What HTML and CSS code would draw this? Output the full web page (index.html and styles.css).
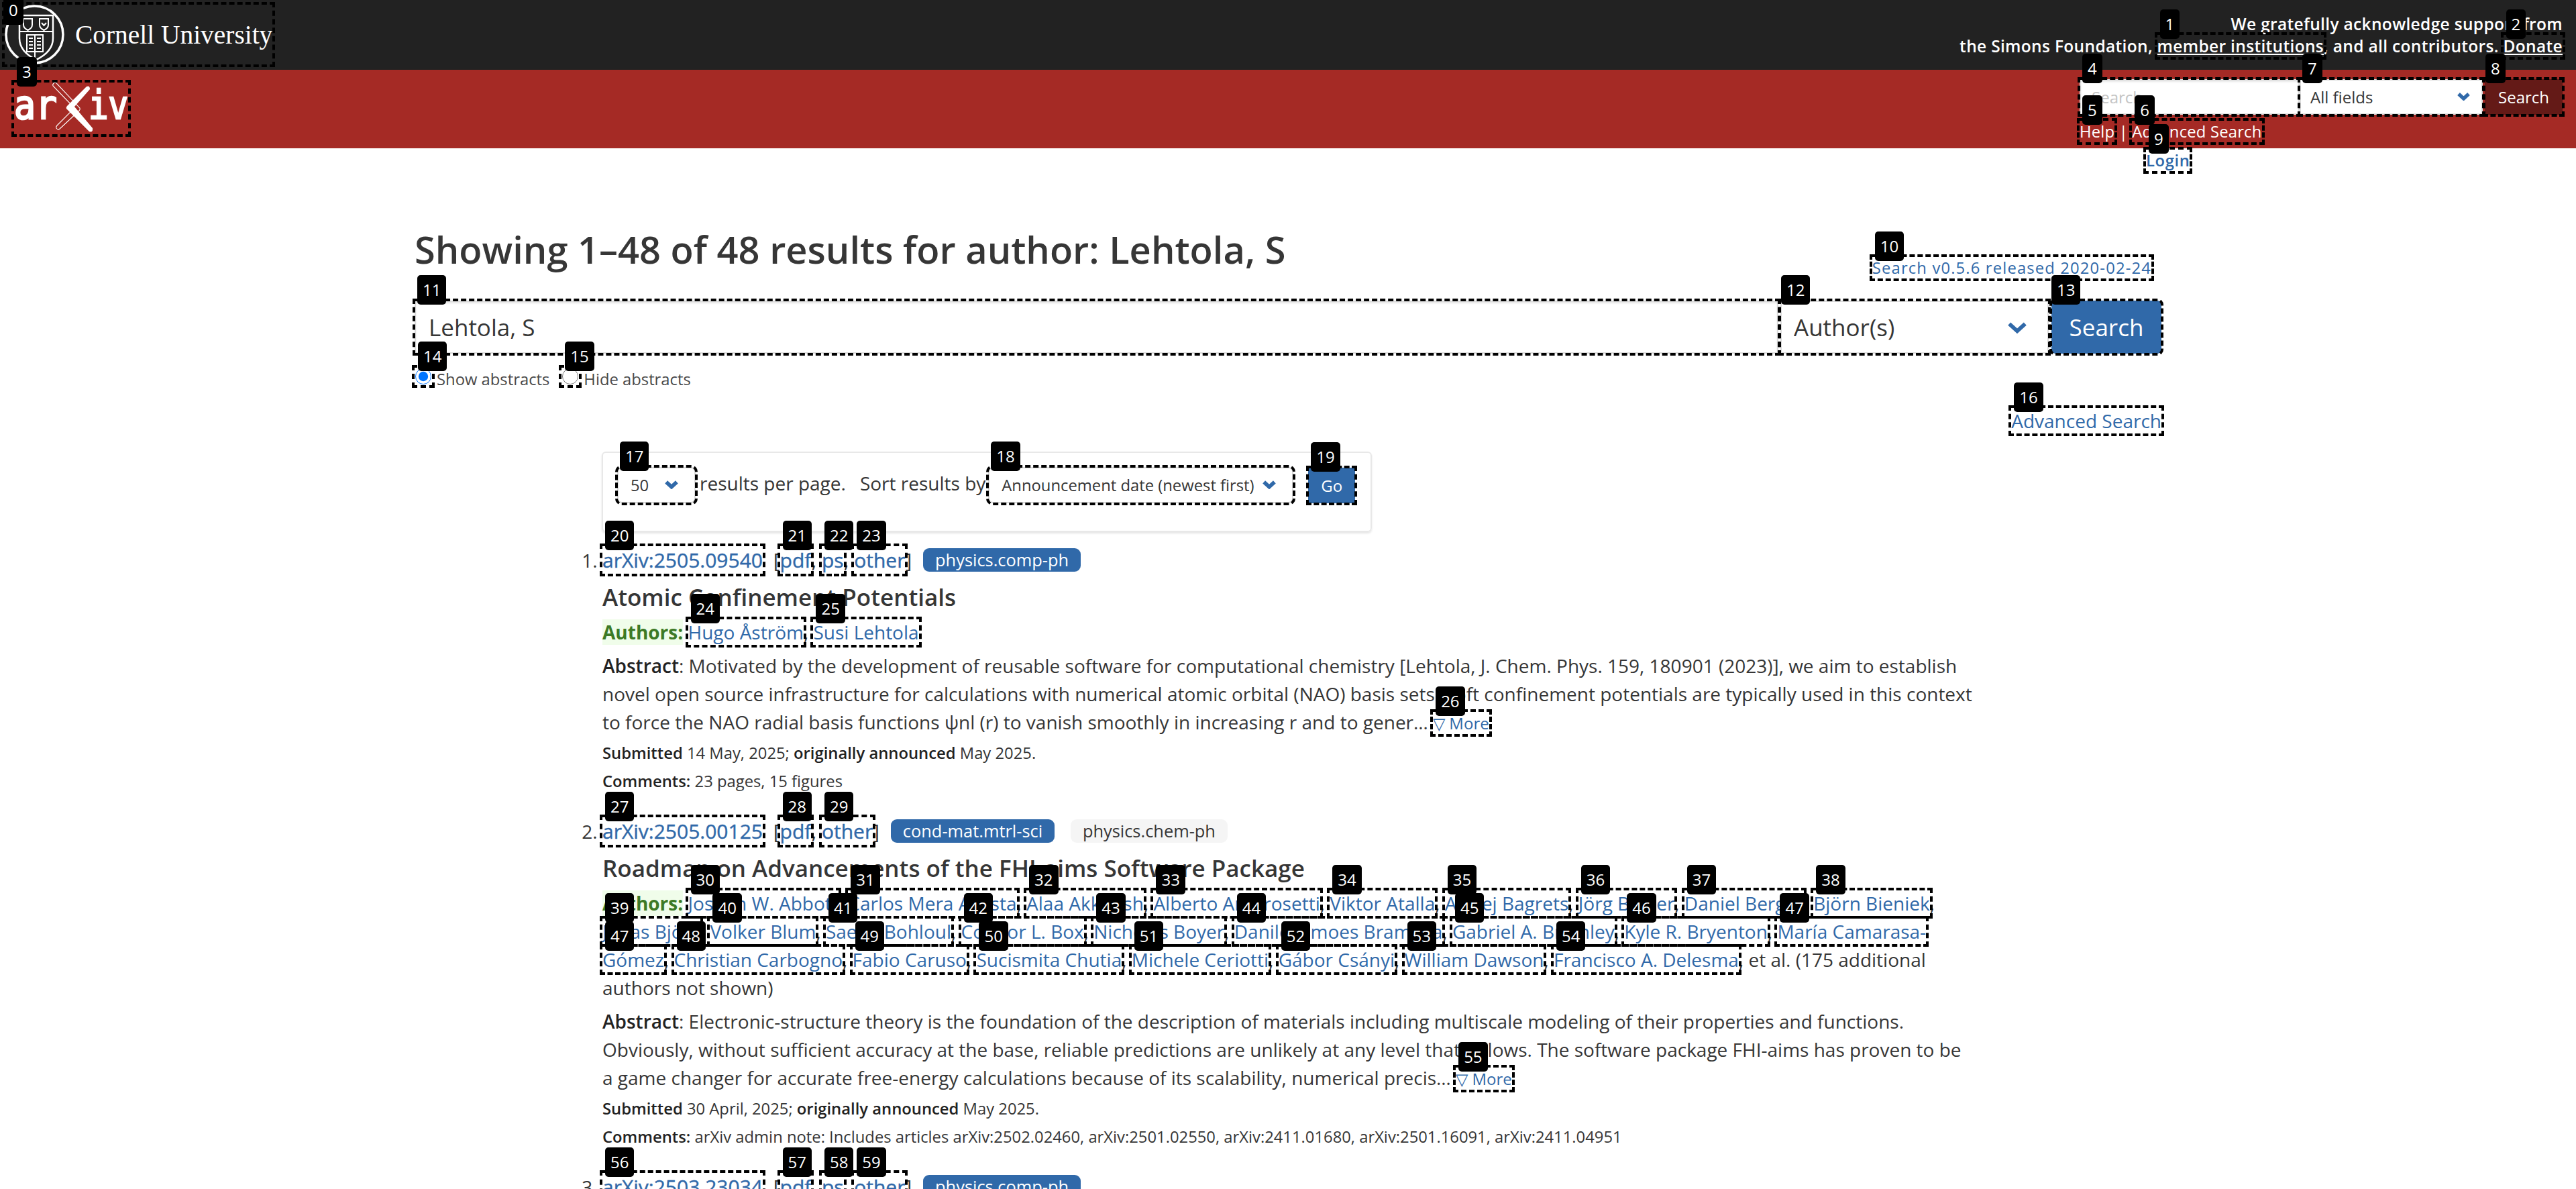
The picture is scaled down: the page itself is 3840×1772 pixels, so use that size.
FILE: index.html

```html
<!DOCTYPE html>
<html lang="en">
<head>
  <meta charset="UTF-8">
  <title>Search | arXiv e-print repository</title>
  <link rel="stylesheet" href="styles.css">
</head>
<body>

  <div class="cu-bar">
    <span class="tagged">
      <a class="mark cu-logo" href="#">
        <svg class="seal" width="89" height="89" viewBox="0 0 89 89" fill="none" stroke="#fff">
          <circle cx="44.5" cy="44.5" r="42.5" stroke-width="3.5"/>
          <path d="M22 16H72V50Q72 70 47 82Q22 70 22 50Z" stroke-width="2.5"/>
          <path d="M22 40H72" stroke-width="2"/>
          <path d="M28 21H41V30Q41 35 34.5 38Q28 35 28 30Z" stroke-width="2"/>
          <path d="M52 21H65V30Q65 35 58.5 38Q52 35 52 30Z" stroke-width="2"/>
          <path d="M55 27L58.500 31L62 27" stroke-width="2"/>
          <path d="M33 45H57V70H33ZM45 45V88" stroke-width="2"/>
          <path d="M36 50H42M36 55H42M36 60H42M36 65H42M48 50H54M48 55H54M48 60H54M48 65H54" stroke-width="2"/>
        </svg>
        <span class="cu-name">Cornell University</span>
      </a>
      <i class="num num-top">0</i>
    </span>
    <div class="support">
      We gratefully acknowledge support from<br>
      the Simons Foundation,
      <span class="tagged"><a class="mark" href="#">member institutions</a><i class="num">1</i></span>,
      and all contributors.
      <span class="tagged"><a class="mark" href="#">Donate</a><i class="num">2</i></span>
    </div>
  </div>

  <div class="red-bar">
    <span class="tagged arxiv">
      <a class="mark arxiv-logo" href="#">
        <svg width="170" height="77" viewBox="0 0 170 77">
          <text x="0" y="54" class="logo-text" textLength="64" lengthAdjust="spacingAndGlyphs">ar</text>
          <text x="111" y="54" class="logo-text" textLength="59" lengthAdjust="spacingAndGlyphs">iv</text>
          <path d="M59 1Q62-1 64 2L98 38Q99 40 97 42L68 69Q65 71 63 68Q62 66 64 64L90 38L58 5Q57 3 59 1Z" fill="none" stroke="#fff" stroke-width="1.100"/>
          <path d="M108 6Q113 4 113 10L90 36L117 68Q118 75 112 73L78 39Q77 37 79 35Z" fill="#fff"/>
        </svg>
      </a>
      <i class="num">3</i>
    </span>

    <div class="nav-search">
      <div class="nav-row">
        <span class="tagged"><input class="mark flush nav-input" placeholder="Search..."><i class="num">4</i></span>
        <span class="tagged">
          <select class="mark flush nav-select"><option>All fields</option></select>
          <svg class="chev chev-nav" viewBox="0 0 28 18"><path d="M3 4L14 14L25 4"/></svg>
          <i class="num">7</i>
        </span>
        <span class="tagged"><button class="mark flush nav-btn">Search</button><i class="num">8</i></span>
      </div>
      <div class="nav-links">
        <span class="tagged"><a class="mark" href="#">Help</a><i class="num">5</i></span> |
        <span class="tagged"><a class="mark" href="#">Advanced Search</a><i class="num">6</i></span>
      </div>
      <div class="nav-login">
        <span class="tagged"><a class="mark" href="#">Login</a><i class="num">9</i></span>
      </div>
    </div>
  </div>

  <div class="main">
    <div class="title-row">
      <h1>Showing 1–48 of 48 results for author: Lehtola, S</h1>
      <div class="version">
        <span class="tagged"><a class="mark" href="#">Search v0.5.6 released 2020-02-24</a><i class="num">10</i></span>
      </div>
    </div>

    <div class="search-row">
      <span class="tagged search-term"><input class="mark flush term-input" value="Lehtola, S"><i class="num">11</i></span>
      <span class="tagged">
        <select class="mark flush term-select"><option>Author(s)</option></select>
        <svg class="chev chev-big" viewBox="0 0 28 18"><path d="M3 4L14 14L25 4"/></svg>
        <i class="num">12</i>
      </span>
      <span class="tagged"><button class="mark flush term-btn">Search</button><i class="num">13</i></span>
    </div>

    <div class="abstract-toggle">
      <span class="tagged"><input class="mark" type="radio" name="abs" checked><i class="num">14</i></span>
      <label>Show abstracts</label>
      <span class="tagged radio-2"><input class="mark" type="radio" name="abs"><i class="num">15</i></span>
      <label>Hide abstracts</label>
    </div>

    <div class="adv-link">
      <span class="tagged"><a class="mark" href="#">Advanced Search</a><i class="num">16</i></span>
    </div>

    <div class="results">
      <div class="controls">
        <span class="tagged">
          <select class="mark flush size-select"><option>50</option></select>
          <svg class="chev chev-small" viewBox="0 0 28 18"><path d="M3 4L14 14L25 4"/></svg>
          <i class="num">17</i>
        </span>
        <span class="ctl-label per-page">results per page.</span>
        <span class="ctl-label sort-by">Sort results by</span>
        <span class="tagged">
          <select class="mark flush sort-select"><option>Announcement date (newest first)</option></select>
          <svg class="chev chev-small" viewBox="0 0 28 18"><path d="M3 4L14 14L25 4"/></svg>
          <i class="num">18</i>
        </span>
        <span class="tagged go"><button class="mark flush go-btn">Go</button><i class="num">19</i></span>
      </div>

      <ol class="result-list">
        <li>
          <div class="list-title">
            <span class="tagged"><a class="mark" href="#">arXiv:2505.09540</a><i class="num">20</i></span>
            <span class="formats">[<span class="tagged"><a class="mark" href="#">pdf</a><i class="num">21</i></span>,
            <span class="tagged"><a class="mark" href="#">ps</a><i class="num">22</i></span>,
            <span class="tagged"><a class="mark" href="#">other</a><i class="num">23</i></span>]</span>
            <span class="pill">physics.comp-ph</span>
          </div>
          <p class="paper-title">Atomic Confinement Potentials</p>
          <p class="authors">
            <span class="authors-label">Authors:</span>
            <span class="tagged"><a class="mark" href="#">Hugo Åström</a><i class="num">24</i></span>,
            <span class="tagged"><a class="mark" href="#">Susi Lehtola</a><i class="num">25</i></span>
          </p>
          <p class="abstract"><strong>Abstract</strong>: Motivated by the development of reusable software for computational chemistry [Lehtola, J. Chem. Phys. 159, 180901 (2023)], we aim to establish novel open source infrastructure for calculations with numerical atomic orbital (NAO) basis sets. Soft confinement potentials are typically used in this context to force the NAO radial basis functions ψnl (r) to vanish smoothly in increasing r and to gener…
            <span class="tagged more"><a class="mark" href="#">▽ More</a><i class="num">26</i></span>
          </p>
          <p class="meta"><strong>Submitted</strong> 14 May, 2025; <strong>originally announced</strong> May 2025.</p>
          <p class="meta meta-last"><strong>Comments:</strong> 23 pages, 15 figures</p>
        </li>
        <li>
          <div class="list-title">
            <span class="tagged"><a class="mark" href="#">arXiv:2505.00125</a><i class="num">27</i></span>
            <span class="formats">[<span class="tagged"><a class="mark" href="#">pdf</a><i class="num">28</i></span>,
            <span class="tagged"><a class="mark" href="#">other</a><i class="num">29</i></span>]</span>
            <span class="pill">cond-mat.mtrl-sci</span>
            <span class="pill pill-light">physics.chem-ph</span>
          </div>
          <p class="paper-title">Roadmap on Advancements of the FHI-aims Software Package</p>
          <p class="authors">
            <span class="authors-label">Authors:</span>
            <span class="tagged"><a class="mark" href="#">Joseph W. Abbott</a><i class="num">30</i></span>,
            <span class="tagged"><a class="mark" href="#">Carlos Mera Acosta</a><i class="num">31</i></span>,
            <span class="tagged"><a class="mark" href="#">Alaa Akkoush</a><i class="num">32</i></span>,
            <span class="tagged"><a class="mark" href="#">Alberto Ambrosetti</a><i class="num">33</i></span>,
            <span class="tagged"><a class="mark" href="#">Viktor Atalla</a><i class="num">34</i></span>,
            <span class="tagged"><a class="mark" href="#">Alexej Bagrets</a><i class="num">35</i></span>,
            <span class="tagged"><a class="mark" href="#">Jörg Behler</a><i class="num">36</i></span>,
            <span class="tagged"><a class="mark" href="#">Daniel Berger</a><i class="num">37</i></span>,
            <span class="tagged"><a class="mark" href="#">Björn Bieniek</a><i class="num">38</i></span>,
            <span class="tagged"><a class="mark" href="#">Jonas Björk</a><i class="num">39</i></span>,
            <span class="tagged"><a class="mark" href="#">Volker Blum</a><i class="num">40</i></span>,
            <span class="tagged"><a class="mark" href="#">Saeed Bohloul</a><i class="num">41</i></span>,
            <span class="tagged"><a class="mark" href="#">Connor L. Box</a><i class="num">42</i></span>,
            <span class="tagged"><a class="mark" href="#">Nicholas Boyer</a><i class="num">43</i></span>,
            <span class="tagged"><a class="mark" href="#">Danilo Simoes Brambila</a><i class="num">44</i></span>,
            <span class="tagged"><a class="mark" href="#">Gabriel A. Bramley</a><i class="num">45</i></span>,
            <span class="tagged"><a class="mark" href="#">Kyle R. Bryenton</a><i class="num">46</i></span>,
            <span class="tagged"><a class="mark" href="#">María Camarasa-</a><i class="num">47</i></span><span class="tagged"><a class="mark" href="#">Gómez</a><i class="num">47</i></span>,
            <span class="tagged"><a class="mark" href="#">Christian Carbogno</a><i class="num">48</i></span>,
            <span class="tagged"><a class="mark" href="#">Fabio Caruso</a><i class="num">49</i></span>,
            <span class="tagged"><a class="mark" href="#">Sucismita Chutia</a><i class="num">50</i></span>,
            <span class="tagged"><a class="mark" href="#">Michele Ceriotti</a><i class="num">51</i></span>,
            <span class="tagged"><a class="mark" href="#">Gábor Csányi</a><i class="num">52</i></span>,
            <span class="tagged"><a class="mark" href="#">William Dawson</a><i class="num">53</i></span>,
            <span class="tagged"><a class="mark" href="#">Francisco A. Delesma</a><i class="num">54</i></span>,
            et al. (175 additional authors not shown)
          </p>
          <p class="abstract"><strong>Abstract</strong>: Electronic-structure theory is the foundation of the description of materials including multiscale modeling of their properties and functions. Obviously, without sufficient accuracy at the base, reliable predictions are unlikely at any level that follows. The software package FHI-aims has proven to be a game changer for accurate free-energy calculations because of its scalability, numerical precis…
            <span class="tagged more"><a class="mark" href="#">▽ More</a><i class="num">55</i></span>
          </p>
          <p class="meta"><strong>Submitted</strong> 30 April, 2025; <strong>originally announced</strong> May 2025.</p>
          <p class="meta meta-last"><strong>Comments:</strong> arXiv admin note: Includes articles arXiv:2502.02460, arXiv:2501.02550, arXiv:2411.01680, arXiv:2501.16091, arXiv:2411.04951</p>
        </li>
        <li>
          <div class="list-title">
            <span class="tagged"><a class="mark" href="#">arXiv:2503.23034</a><i class="num">56</i></span>
            <span class="formats">[<span class="tagged"><a class="mark" href="#">pdf</a><i class="num">57</i></span>,
            <span class="tagged"><a class="mark" href="#">ps</a><i class="num">58</i></span>,
            <span class="tagged"><a class="mark" href="#">other</a><i class="num">59</i></span>]</span>
            <span class="pill">physics.comp-ph</span>
          </div>
        </li>
      </ol>
    </div>
  </div>

</body>
</html>
```

FILE: styles.css

```css
html, body {
  height: 1772px;
  overflow: hidden;
}
body {
  margin: 0;
  font-family: "Open Sans", sans-serif;
  font-size: 28px;
  line-height: 42px;
  color: #363636;
  background: #fff;
}
a {
  color: #3069a9;
  text-decoration: none;
}
p, h1 {
  margin: 0;
}
input, select, button {
  display: block;
  margin: 0;
  font-family: inherit;
  box-sizing: border-box;
}
select {
  appearance: none;
  background: #fff;
  color: #363636;
}

/* numbered boxes */
.tagged {
  position: relative;
}
.mark {
  outline: 4px dashed #000;
  outline-offset: 0;
}
.flush {
  outline-offset: -1px;
}
.num {
  position: absolute;
  left: 4px;
  top: -38px;
  z-index: 5;
  height: 44px;
  padding: 0 8px;
  border-radius: 5px;
  background: #000;
  color: #fff;
  font-size: 24px;
  font-style: normal;
  font-weight: 400;
  line-height: 44px;
  letter-spacing: 0;
  text-decoration: none;
  white-space: nowrap;
  -webkit-text-stroke: 0;
}
.num-top {
  top: -7px;
  left: 5px;
}
.chev {
  position: absolute;
  fill: none;
  stroke: #3069a9;
  stroke-width: 8;
}
.chev-nav {
  right: 19px;
  top: 19px;
  width: 19px;
  height: 13px;
}
.chev-big {
  right: 32px;
  top: 30px;
  width: 30px;
  height: 20px;
  stroke-width: 5.500;
}
.chev-small {
  right: 26px;
  top: 19px;
  width: 20px;
  height: 14px;
}

/* top bars */
.cu-bar {
  display: flex;
  justify-content: space-between;
  height: 104px;
  background: #222;
  color: #fff;
}
.cu-bar .tagged {
  align-self: flex-start;
}
.cu-logo {
  display: flex;
  align-items: center;
  gap: 16px;
  width: 399px;
  height: 89px;
  margin: 7px 0 0 7px;
  color: #fff;
}
.seal {
  flex: none;
}
.cu-name {
  font-family: "Liberation Serif", serif;
  font-size: 39.400px;
  white-space: nowrap;
}
.support {
  padding: 19px 20px 0 0;
  text-align: right;
  font-size: 24.500px;
  font-weight: 600;
  line-height: 33px;
  letter-spacing: 0.33px;
}
.support .tagged {
  align-self: auto;
}
.support a {
  color: #fff;
  text-decoration: underline;
}
.red-bar {
  display: flex;
  justify-content: space-between;
  align-items: flex-start;
  height: 117px;
  background: #a52a25;
}
.arxiv {
  display: block;
  margin: 19px 0 0 21px;
}
.arxiv-logo {
  display: block;
  width: 170px;
  height: 77px;
}
.arxiv-logo svg {
  overflow: visible;
}
.logo-text {
  fill: #fff;
  stroke: #fff;
  stroke-width: 2.500;
  font-family: "DejaVu Sans Mono", monospace;
  font-size: 58px;
}
.nav-search {
  width: 720px;
  margin: 14px 20px 0 0;
  font-size: 23.800px;
  line-height: 34px;
  letter-spacing: 0.2px;
}
.nav-row {
  display: flex;
}
.nav-input {
  width: 328px;
  height: 53px;
  padding: 0 16px;
  border: 2px solid #ddd;
  box-shadow: inset 0 2px 3px rgba(10, 10, 10, 0.1);
  font-size: 24px;
}
.nav-input::placeholder {
  color: #c4c4c4;
}
.nav-select {
  width: 273px;
  height: 53px;
  padding: 0 14px;
  border: 2px solid #ddd;
  border-radius: 0;
  font-size: 24px;
}
.nav-btn {
  width: 116px;
  height: 53px;
  margin-left: 3px;
  border: 0;
  background: #641a17;
  color: #fff;
  font-size: 24px;
}
.nav-links {
  margin-top: 8px;
  color: #fff;
}
.nav-links a {
  color: #fff;
}
.nav-login {
  margin-top: 9px;
  padding-left: 99px;
  letter-spacing: 0.6px;
}
.nav-login a {
  font-weight: 600;
}

/* search form */
.main {
  width: 2604px;
  margin: 0 auto;
}
.title-row {
  display: flex;
  justify-content: space-between;
  align-items: flex-start;
}
h1 {
  margin-top: 119px;
  font-size: 56px;
  font-weight: 600;
  line-height: 63px;
}
.version {
  margin: 161px 15px 0 0;
  font-size: 23.800px;
  line-height: 34px;
  letter-spacing: 1.150px;
}
.search-row {
  display: flex;
  margin-top: 32px;
  font-size: 35px;
}
.search-term {
  flex: 1;
}
.term-input {
  width: 100%;
  height: 79px;
  padding: 0 19px;
  border: 2px solid #dbdbdb;
  box-shadow: inset 0 2px 3px rgba(10, 10, 10, 0.1);
  color: #363636;
  font-size: 35px;
}
.term-select {
  width: 400px;
  height: 79px;
  margin-left: 3px;
  padding: 0 18px;
  border: 2px solid #dbdbdb;
  border-radius: 0;
  font-size: 35px;
}
.term-btn {
  width: 164px;
  height: 79px;
  margin-left: 4px;
  border: 0;
  border-radius: 6px;
  background: #3069a9;
  color: #fff;
  font-size: 35px;
}
.abstract-toggle {
  display: flex;
  margin: 20px 0 0 1px;
  font-size: 23.800px;
  line-height: 36px;
  color: #4a4a4a;
}
.abstract-toggle input {
  width: 24px;
  height: 24px;
  margin-top: 2px;
  outline-offset: 1px;
}
.abstract-toggle label {
  margin-left: 8px;
}
.radio-2 {
  margin-left: 19px;
}
.adv-link {
  margin-top: 23px;
  text-align: right;
}

/* results */
.results {
  width: 2047px;
  margin-left: 280px;
}
.controls {
  display: flex;
  align-items: center;
  box-sizing: border-box;
  width: 1148px;
  height: 120px;
  margin: 25px 0 0 -1px;
  padding: 0 0 20px 21px;
  border: 2px solid #e8e8e8;
  border-radius: 6px;
  box-shadow: 0 2px 3px rgba(10, 10, 10, 0.1);
}
.controls select {
  height: 54px;
  padding: 0 18px;
  border: 2px solid #dbdbdb;
  border-radius: 7px;
  font-size: 23.800px;
}
.size-select {
  width: 117px;
}
.sort-select {
  width: 455px;
}
.ctl-label {
  margin-bottom: 6px;
}
.per-page {
  margin-left: 6px;
}
.sort-by {
  margin: 0 4px 6px 21px;
}
.go {
  margin-left: 22px;
}
.go-btn {
  width: 70px;
  height: 53px;
  border: 0;
  background: #3069a9;
  color: #fff;
  font-size: 24px;
}
.result-list {
  margin: 21px 0 0;
  padding: 0;
}
.result-list li {
  margin-bottom: 36px;
}
.list-title {
  height: 42px;
  font-size: 30px;
  white-space: nowrap;
}
.list-title a {
  -webkit-text-stroke: 0.4px #3069a9;
}
.formats {
  margin-left: 8px;
}
.pill {
  display: inline-block;
  height: 35px;
  margin-left: 9px;
  padding: 0 18px;
  border-radius: 9px;
  background: #3069a9;
  color: #fff;
  font-size: 25.400px;
  line-height: 34px;
  vertical-align: 2px;
}
.pill + .pill {
  margin-left: 16px;
}
.pill-light {
  background: #f5f5f5;
  color: #363636;
}
.paper-title {
  margin-top: 12px;
  font-size: 35px;
  font-weight: 600;
  line-height: 44px;
}
.authors {
  margin-top: 9px;
}
.authors-label {
  background: #f0fdea;
  color: #3d7a26;
  font-weight: 700;
}
.abstract {
  margin-top: 8px;
}
.abstract strong, .meta strong {
  color: #222;
  font-weight: 600;
}
.more {
  font-size: 24px;
}
.meta {
  margin-top: 5px;
  font-size: 23.800px;
  line-height: 36px;
}
.meta-last {
  margin-top: 6px;
}
```
